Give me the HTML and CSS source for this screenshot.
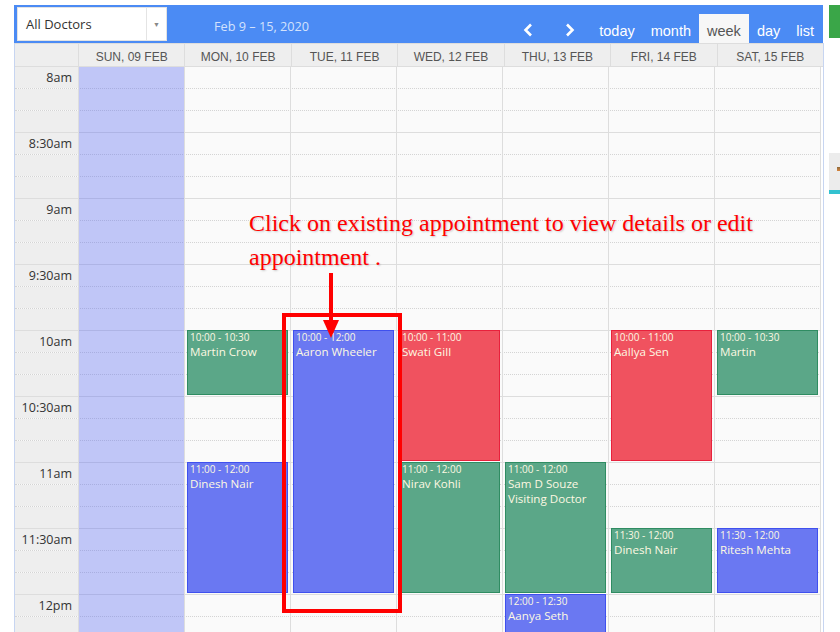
FILE: index.html
```html
<!DOCTYPE html>
<html lang="en">
  <head>
    <meta charset="UTF-8" />
    <title>Appointments</title>
    <link rel="stylesheet" href="styles.css">
  </head>
  <body>
    <div class="page">
      <div class="calendar">
        <div class="toolbar">
          <div class="doctor-select">
            <span class="doctor-name">All Doctors</span>
            <span class="caret">&#9660;</span>
          </div>
          <div class="range">Feb 9 – 15, 2020</div>
          <div class="nav">
            <button class="icon-btn">
              <svg width="10" height="14" viewBox="0 0 10 14"><path d="M8 1.5 L2.5 7 L8 12.5" fill="none" stroke="#fff" stroke-width="2.6" /></svg>
            </button>
            <button class="icon-btn">
              <svg width="10" height="14" viewBox="0 0 10 14"><path d="M2 1.5 L7.5 7 L2 12.5" fill="none" stroke="#fff" stroke-width="2.6" /></svg>
            </button>
            <button>today</button>
            <button>month</button>
            <button class="active">week</button>
            <button>day</button>
            <button>list</button>
          </div>
        </div>

        <div class="view">
          <div class="day-heads">
            <div class="axis-head"></div>
            <div class="day-head">SUN, 09 FEB</div>
            <div class="day-head">MON, 10 FEB</div>
            <div class="day-head">TUE, 11 FEB</div>
            <div class="day-head">WED, 12 FEB</div>
            <div class="day-head">THU, 13 FEB</div>
            <div class="day-head">FRI, 14 FEB</div>
            <div class="day-head">SAT, 15 FEB</div>
          </div>

          <div class="grid">
            <div class="slats">
              <div class="slot"><div class="axis">8am</div><div class="lane"></div></div>
              <div class="slot"><div class="axis"></div><div class="lane"></div></div>
              <div class="slot major"><div class="axis"></div><div class="lane"></div></div>
              <div class="slot"><div class="axis">8:30am</div><div class="lane"></div></div>
              <div class="slot"><div class="axis"></div><div class="lane"></div></div>
              <div class="slot major"><div class="axis"></div><div class="lane"></div></div>
              <div class="slot"><div class="axis">9am</div><div class="lane"></div></div>
              <div class="slot"><div class="axis"></div><div class="lane"></div></div>
              <div class="slot major"><div class="axis"></div><div class="lane"></div></div>
              <div class="slot"><div class="axis">9:30am</div><div class="lane"></div></div>
              <div class="slot"><div class="axis"></div><div class="lane"></div></div>
              <div class="slot major"><div class="axis"></div><div class="lane"></div></div>
              <div class="slot"><div class="axis">10am</div><div class="lane"></div></div>
              <div class="slot"><div class="axis"></div><div class="lane"></div></div>
              <div class="slot major"><div class="axis"></div><div class="lane"></div></div>
              <div class="slot"><div class="axis">10:30am</div><div class="lane"></div></div>
              <div class="slot"><div class="axis"></div><div class="lane"></div></div>
              <div class="slot major"><div class="axis"></div><div class="lane"></div></div>
              <div class="slot"><div class="axis">11am</div><div class="lane"></div></div>
              <div class="slot"><div class="axis"></div><div class="lane"></div></div>
              <div class="slot major"><div class="axis"></div><div class="lane"></div></div>
              <div class="slot"><div class="axis">11:30am</div><div class="lane"></div></div>
              <div class="slot"><div class="axis"></div><div class="lane"></div></div>
              <div class="slot major"><div class="axis"></div><div class="lane"></div></div>
              <div class="slot"><div class="axis">12pm</div><div class="lane"></div></div>
              <div class="slot"><div class="axis"></div><div class="lane"></div></div>
              <div class="slot major"><div class="axis"></div><div class="lane"></div></div>
            </div>

            <div class="cols">
              <div class="col today"></div>
              <div class="col">
                <div class="event green" style="top: 263px; height: 65px;">
                  <div class="event-time">10:00 - 10:30</div>
                  <div class="event-title">Martin Crow</div>
                </div>
                <div class="event blue" style="top: 395px; height: 131px;">
                  <div class="event-time">11:00 - 12:00</div>
                  <div class="event-title">Dinesh Nair</div>
                </div>
              </div>
              <div class="col">
                <div class="event blue" style="top: 263px; height: 263px;">
                  <div class="event-time">10:00 - 12:00</div>
                  <div class="event-title">Aaron Wheeler</div>
                </div>
              </div>
              <div class="col">
                <div class="event red" style="top: 263px; height: 131px;">
                  <div class="event-time">10:00 - 11:00</div>
                  <div class="event-title">Swati Gill</div>
                </div>
                <div class="event green" style="top: 395px; height: 131px;">
                  <div class="event-time">11:00 - 12:00</div>
                  <div class="event-title">Nirav Kohli</div>
                </div>
              </div>
              <div class="col">
                <div class="event green" style="top: 395px; height: 131px;">
                  <div class="event-time">11:00 - 12:00</div>
                  <div class="event-title">Sam D Souze Visiting Doctor</div>
                </div>
                <div class="event blue" style="top: 527px; height: 65px;">
                  <div class="event-time">12:00 - 12:30</div>
                  <div class="event-title">Aanya Seth</div>
                </div>
              </div>
              <div class="col">
                <div class="event red" style="top: 263px; height: 131px;">
                  <div class="event-time">10:00 - 11:00</div>
                  <div class="event-title">Aallya Sen</div>
                </div>
                <div class="event green" style="top: 461px; height: 65px;">
                  <div class="event-time">11:30 - 12:00</div>
                  <div class="event-title">Dinesh Nair</div>
                </div>
              </div>
              <div class="col">
                <div class="event green" style="top: 263px; height: 65px;">
                  <div class="event-time">10:00 - 10:30</div>
                  <div class="event-title">Martin</div>
                </div>
                <div class="event blue" style="top: 461px; height: 65px;">
                  <div class="event-time">11:30 - 12:00</div>
                  <div class="event-title">Ritesh Mehta</div>
                </div>
              </div>
            </div>
          </div>
        </div>
      </div>

      <div class="side">
        <div class="side-btn"></div>
        <div class="side-tab"><span class="side-mark"></span></div>
      </div>

      <!-- help overlay drawn on the screenshot -->
      <div class="note">Click on existing appointment to view details or edit<br>appointment .</div>
      <svg class="note-arrow" width="20" height="70" viewBox="0 0 20 70">
        <rect x="9" y="3" width="4" height="50" fill="#f00" />
        <polygon points="3,50 19,50 11,68" fill="#f00" />
      </svg>
      <div class="note-box"></div>
    </div>
  </body>
</html>
```

FILE: styles.css
```css
body {
  margin: 0;
  height: 632px;
  overflow: hidden;
  background: #fff;
  font-family: "Open Sans", sans-serif;
  color: #333;
}
.page {
  position: relative;
  display: flex;
  align-items: flex-start;
  padding: 5px 0 0 14px;
}
.calendar {
  width: 809px;
  flex-shrink: 0;
}

/* toolbar */
.toolbar {
  display: flex;
  align-items: flex-start;
  height: 38px;
  background-color: #4b8bf4;
}
.doctor-select {
  display: flex;
  align-items: center;
  width: 150px;
  height: 34px;
  margin: 2px 0 0 3px;
  background: #fff;
  box-sizing: border-box;
  border: 1px solid #e3e3e3;
}
.doctor-name {
  flex: 1;
  padding-left: 8px;
  font-size: 13px;
  color: #333;
}
.caret {
  width: 19px;
  height: 100%;
  border-left: 1px solid #e4e4e4;
  display: flex;
  align-items: center;
  justify-content: center;
  font-size: 7px;
  color: #888;
}
.range {
  margin: 12px 0 0 47px;
  font-size: 12.7px;
  color: #d3e2fc;
}
.nav {
  display: flex;
  align-items: stretch;
  height: 29px;
  margin: 9px 0 0 auto;
  padding-right: 1px;
}
.nav button {
  padding: 3px 8px 0;
  margin: 0;
  border: none;
  background: none;
  font-family: "Liberation Sans", Arial, sans-serif;
  font-size: 14.5px;
  color: #fff;
  line-height: 29px;
  cursor: pointer;
}
.nav .icon-btn {
  width: 42px;
  padding: 3px 0 0;
  display: flex;
  align-items: center;
  justify-content: center;
}
.nav .active {
  background-color: #f7f7f7;
  color: #555;
}

/* week view */
.view {
  width: 808px;
  border-left: 1px solid #c7d5f1;
  border-right: 1px solid #c7d5f1;
}
.day-heads {
  display: flex;
  height: 24px;
  box-sizing: border-box;
  background-color: #eee;
  border-top: 1px solid #ddd;
  border-bottom: 1px solid #ddd;
}
.axis-head {
  width: 63px;
}
.day-head {
  flex: 1;
  border-left: 1px solid #ddd;
  text-align: center;
  font-family: "Liberation Sans", Arial, sans-serif;
  font-size: 12px;
  line-height: 22px;
  padding-top: 2px;
  color: #555;
}
.grid {
  position: relative;
  margin-right: 2px;
  background-color: #fafafa;
}
.slot {
  display: flex;
  height: 22px;
  box-sizing: border-box;
  border-bottom: 1px dotted #d4d4d4;
}
.slot.major {
  border-bottom: 1px solid #ddd;
}
.axis {
  width: 63px;
  padding-right: 6px;
  box-sizing: border-box;
  background-color: #eee;
  text-align: right;
  font-size: 12.5px;
  line-height: 21px;
  color: #333;
}
.lane {
  flex: 1;
}
.cols {
  position: absolute;
  top: 0;
  left: 63px;
  right: 0;
  bottom: 0;
  display: flex;
}
.col {
  position: relative;
  flex: 1;
  border-left: 1px solid #ddd;
}
.col:last-child {
  border-right: 1px solid #ddd;
}
.col.today {
  background-color: rgba(105, 120, 242, 0.4);
}

/* events */
.event {
  position: absolute;
  left: 2px;
  right: 2px;
  box-sizing: border-box;
  border: 1px solid;
  padding: 0 2px;
  overflow: hidden;
  color: #fdf8e2;
}
.event-time {
  font-size: 10px;
  line-height: 13px;
}
.event-title {
  font-size: 11.6px;
  line-height: 15px;
}
.green {
  background-color: #5ba788;
  border-color: #2f8c62;
}
.blue {
  background-color: #6a78f2;
  border-color: #3f50ee;
}
.red {
  background-color: #f0525f;
  border-color: #e8213c;
}

/* right edge */
.side {
  margin-left: 6px;
  width: 14px;
  flex-shrink: 0;
}
.side-btn {
  height: 33px;
  background-color: #3aa648;
}
.side-tab {
  position: relative;
  height: 41px;
  margin-top: 115px;
  box-sizing: border-box;
  background-color: #ececec;
  border-bottom: 4px solid #33c2d0;
}
.side-mark {
  position: absolute;
  top: 14px;
  left: 8px;
  width: 3px;
  height: 4px;
  background: linear-gradient(#8c6a3c, #d9843a);
}

/* annotation overlay */
.note {
  position: absolute;
  left: 249px;
  top: 206px;
  font-family: "Liberation Serif", "Times New Roman", serif;
  font-size: 24px;
  line-height: 34px;
  color: #f00;
  text-shadow: 1px 1px 2px rgba(0, 0, 0, 0.2);
  white-space: nowrap;
}
.note-arrow {
  position: absolute;
  left: 320px;
  top: 270px;
}
.note-box {
  position: absolute;
  left: 282px;
  top: 313px;
  width: 120px;
  height: 300px;
  box-sizing: border-box;
  border: 4px solid #f00;
}
```
